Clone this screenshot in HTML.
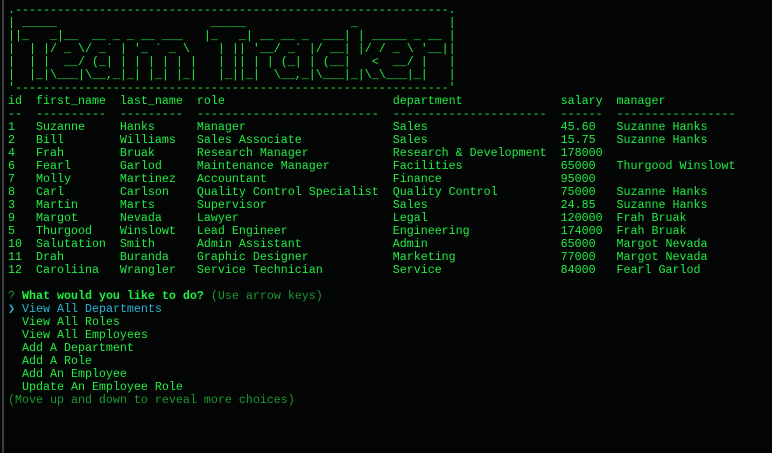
<!DOCTYPE html>
<html><head><meta charset="utf-8"><style>
html,body{margin:0;padding:0;background:#030504;width:772px;height:453px;overflow:hidden}
body{position:relative}
.bar{position:absolute;left:2px;top:0;width:2px;height:453px;background:#3a3d3c}
pre{position:absolute;left:8px;top:4px;margin:0;font-family:"Liberation Mono",monospace;font-size:11.67px;line-height:13px;color:#22ee44;white-space:pre}
.b{font-weight:bold}
.d{color:#1b9a33}
.c{color:#2bb7d6}
</style></head><body><div class="bar"></div>
<pre>.--------------------------------------------------------------.
| _____                      _____               _             |
||_   _|__  __ _ _ __ ___   |_   _| __ __ _  ___| | _____ _ __ |
|  | |/ _ \/ _` | '_ ` _ \    | || '__/ _` |/ __| |/ / _ \ '__||
|  | |  __/ (_| | | | | | |   | || | | (_| | (__|   &lt;  __/ |   |
|  |_|\___|\__,_|_| |_| |_|   |_||_|  \__,_|\___|_|\_\___|_|   |
'--------------------------------------------------------------'
id  first_name  last_name  role                        department              salary  manager
--  ----------  ---------  --------------------------  ----------------------  ------  -----------------
1   Suzanne     Hanks      Manager                     Sales                   45.60   Suzanne Hanks
2   Bill        Williams   Sales Associate             Sales                   15.75   Suzanne Hanks
4   Frah        Bruak      Research Manager            Research &amp; Development  178000
6   Fearl       Garlod     Maintenance Manager         Facilities              65000   Thurgood Winslowt
7   Molly       Martinez   Accountant                  Finance                 95000
8   Carl        Carlson    Quality Control Specialist  Quality Control         75000   Suzanne Hanks
3   Martin      Marts      Supervisor                  Sales                   24.85   Suzanne Hanks
9   Margot      Nevada     Lawyer                      Legal                   120000  Frah Bruak
5   Thurgood    Winslowt   Lead Engineer               Engineering             174000  Frah Bruak
10  Salutation  Smith      Admin Assistant             Admin                   65000   Margot Nevada
11  Drah        Buranda    Graphic Designer            Marketing               77000   Margot Nevada
12  Caroliina   Wrangler   Service Technician          Service                 84000   Fearl Garlod

<span class="d">?</span> <span class="b">What would you like to do?</span> <span class="d">(Use arrow keys)</span>
<span class="c">❯ View All Departments</span>
  View All Roles
  View All Employees
  Add A Department
  Add A Role
  Add An Employee
  Update An Employee Role
<span class="d">(Move up and down to reveal more choices)</span></pre>
</body></html>
